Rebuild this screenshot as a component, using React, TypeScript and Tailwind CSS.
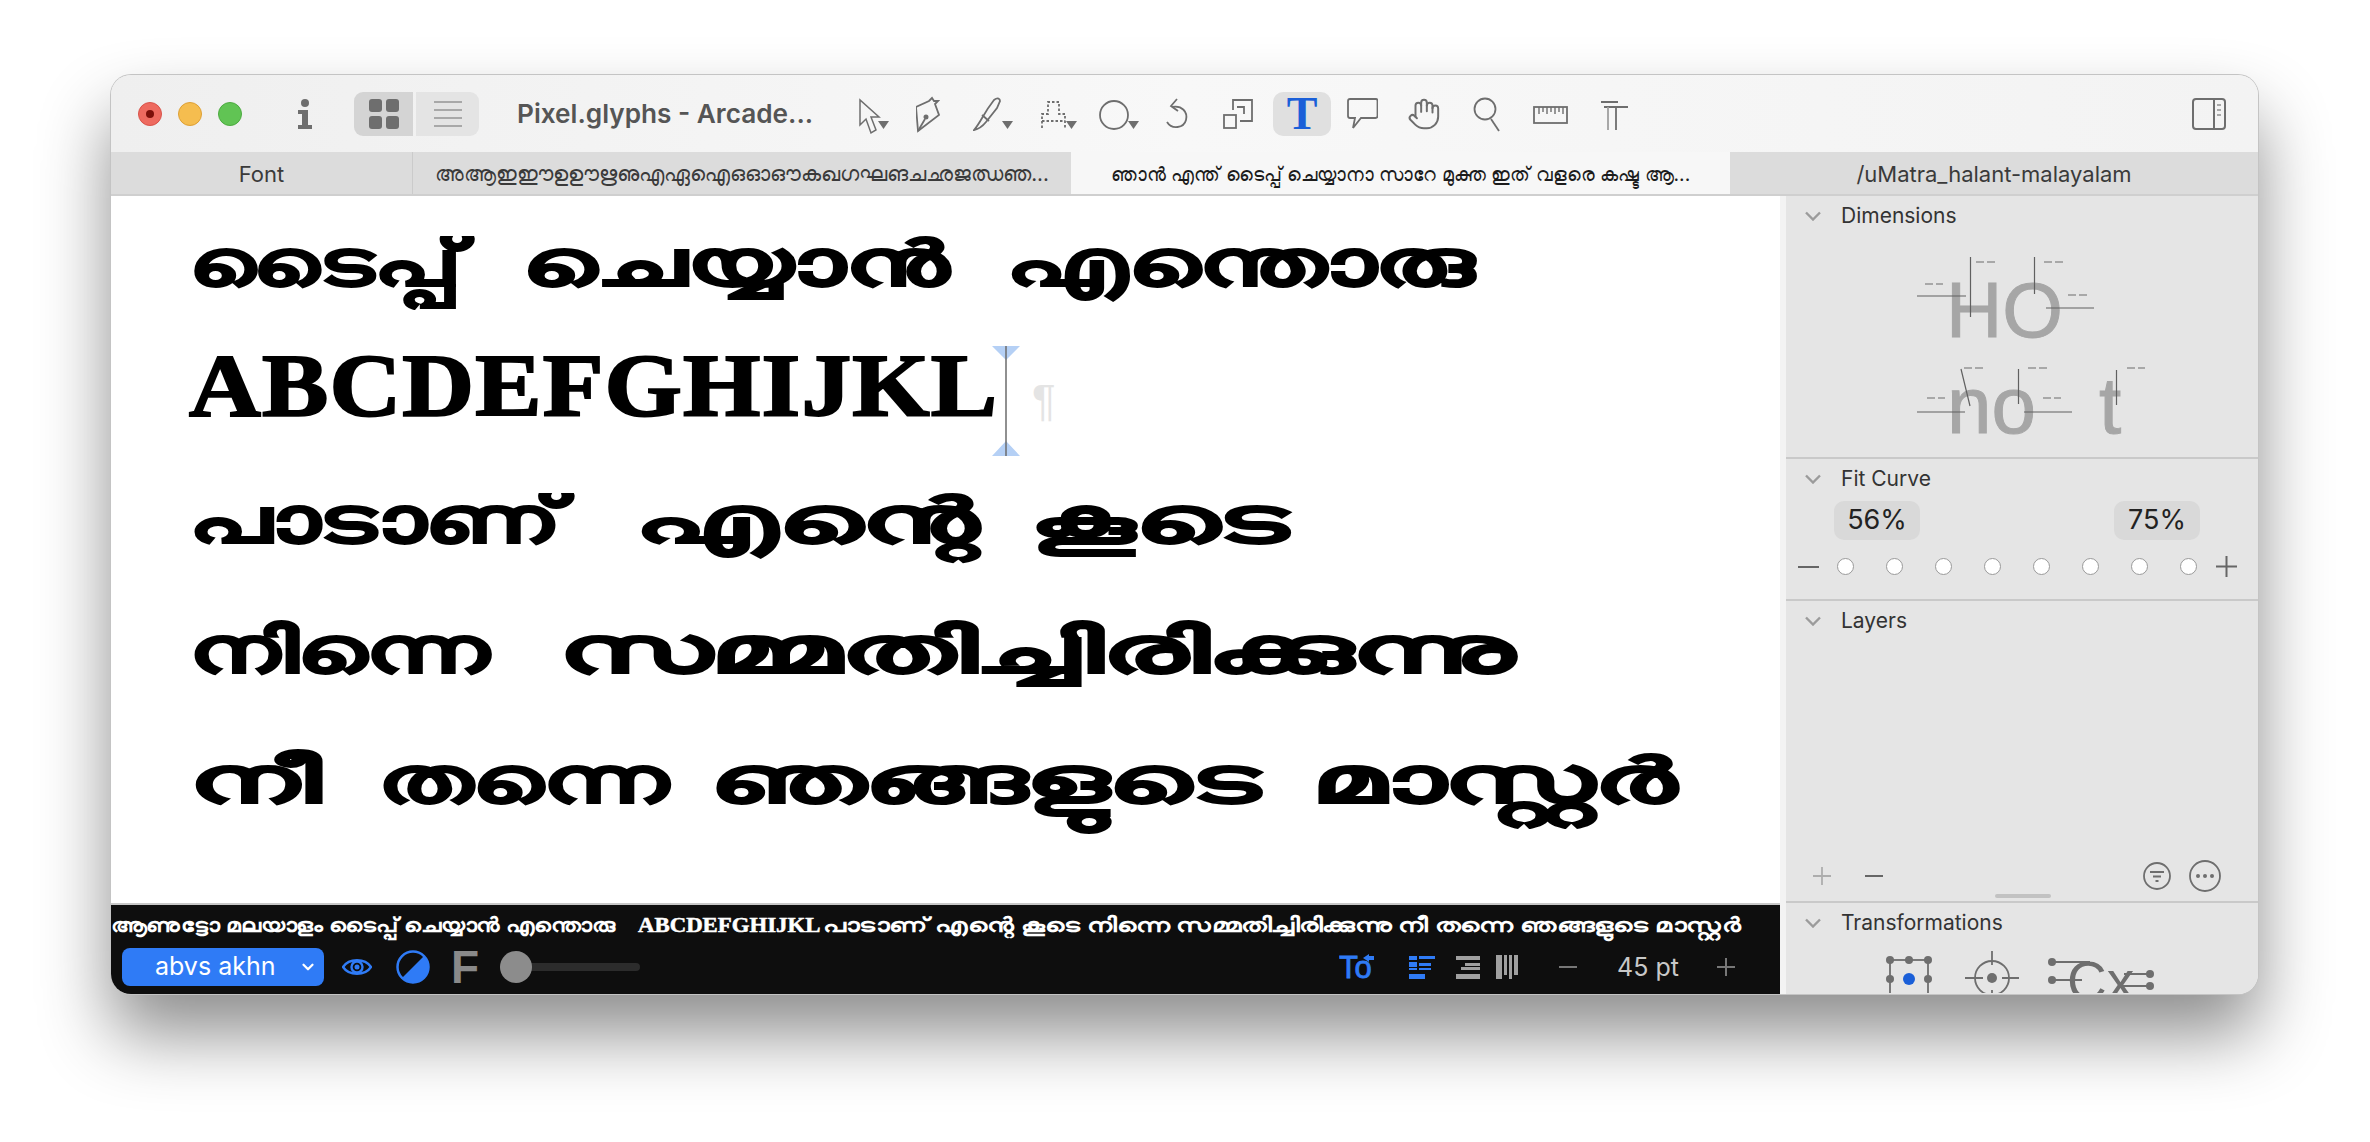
import React from "react";
import { ChevronDown, Hand } from "lucide-react";

const ICON = "#6e6e6e";

const Caret = ({ x }: { x: number }) => <path d={`M${x} 29h11l-5.5 8z`} fill={ICON} stroke="none" />;

const Chevron = () => (
  <svg width="16" height="10" viewBox="0 0 16 10" fill="none" className="shrink-0">
    <path d="M1 1.5l7 7 7-7" stroke="#9b9b9b" strokeWidth="2.4" />
  </svg>
);

const Tool = ({ w, ml, children }: { w: number; ml: string; children: React.ReactNode }) => (
  <svg width={w} height="44" viewBox={`0 0 ${w} 44`} fill="none" stroke={ICON} strokeWidth="1.8" className={`shrink-0 ${ml}`}>
    {children}
  </svg>
);

const Toolbar = () => (
  <div className="h-[77px] shrink-0 flex items-center pt-[1px] pl-[27px] pr-[32px] bg-gradient-to-r from-[#efefef] via-[#f8f8f8] to-[#f3f3f3]">
    <div className="flex items-center gap-[16px]">
      <div className="w-[24px] h-[24px] rounded-full bg-[#ee6a5f] border border-[#d9534a] flex items-center justify-center">
        <div className="w-[8px] h-[8px] rounded-full bg-[#7d100a]" />
      </div>
      <div className="w-[24px] h-[24px] rounded-full bg-[#f5bd4f] border border-[#dea035]" />
      <div className="w-[24px] h-[24px] rounded-full bg-[#61c454] border border-[#4cab40]" />
    </div>
    <svg width="16" height="44" viewBox="0 0 16 44" fill={ICON} className="ml-[55px] shrink-0">
      <circle cx="8" cy="11" r="4" />
      <path d="M1 18h10v15h4v4H1v-4h4V22H1z" />
    </svg>
    <div className="ml-[41px] flex gap-[3px]">
      <div className="w-[59px] h-[44px] rounded-l-[9px] bg-[#d4d4d4] flex items-center justify-center">
        <div className="grid grid-cols-2 gap-[4px]">
          <div className="w-[13px] h-[13px] rounded-[3px] bg-[#6e6e6e]" />
          <div className="w-[13px] h-[13px] rounded-[3px] bg-[#6e6e6e]" />
          <div className="w-[13px] h-[13px] rounded-[3px] bg-[#6e6e6e]" />
          <div className="w-[13px] h-[13px] rounded-[3px] bg-[#6e6e6e]" />
        </div>
      </div>
      <div className="w-[63px] h-[44px] rounded-r-[9px] bg-[#e4e4e4] flex flex-col items-center justify-center gap-[6px]">
        <div className="w-[28px] h-[2px] bg-[#a8a8a8]" />
        <div className="w-[28px] h-[2px] bg-[#a8a8a8]" />
        <div className="w-[28px] h-[2px] bg-[#a8a8a8]" />
        <div className="w-[28px] h-[2px] bg-[#a8a8a8]" />
      </div>
    </div>
    <div className="ml-[38px] w-[300px] shrink-0 whitespace-nowrap text-[26.2px] font-semibold text-[#555555] font-['Inter',sans-serif]">
      Pixel.glyphs - Arcade...
    </div>
    <Tool w={32} ml="ml-[41px]">
      <path d="M2 8v25l6-6 5 14 5-3-5-13h8z" strokeWidth="1.5" />
      <path d="M20 29h11l-5.5 8z" fill={ICON} stroke="none" />
    </Tool>
    <Tool w={24} ml="ml-[26px]">
      <path d="M2 39L0 15l13-6 3-3 2 3h4l-3 3 4 11z" />
      <path d="M2 39l7-12" />
      <circle cx="10" cy="25" r="1.6" fill={ICON} />
    </Tool>
    <Tool w={41} ml="ml-[33px]">
      <path d="M1 38c7-8 9-16 20-30 4-3 6-1 6 1l-3 7-11 14c-4 5-7 7-12 8z" />
      <path d="M9 23l7 6" />
      <Caret x={29} />
    </Tool>
    <Tool w={36} ml="ml-[27px]">
      <path d="M1 36V22h6V10h11v12h6v14M1 29h23" strokeDasharray="2.5 2" />
      <Caret x={25} />
    </Tool>
    <Tool w={40} ml="ml-[22px]">
      <circle cx="15" cy="23" r="14" />
      <Caret x={29} />
    </Tool>
    <Tool w={25} ml="ml-[25px]">
      <path d="M8 15c10-2 16 5 14 13-2 8-14 10-19 2M13 7l-6 7 7 5" />
    </Tool>
    <Tool w={30} ml="ml-[34px]">
      <path d="M10 18V8h19v21H17" />
      <rect x="1" y="23" width="12" height="13" />
      <path d="M14 15h7v7" />
    </Tool>
    <div className="ml-[20px] w-[58px] h-[44px] shrink-0 rounded-[10px] bg-[#e0e0e0] flex items-center justify-center text-[46px] leading-none font-bold text-[#1a5fd8] font-['Liberation_Serif',serif]">
      T
    </div>
    <Tool w={31} ml="ml-[16px]">
      <path d="M3 7h26q1.500 0 1.500 2v15q0 2-2 2H14L6 36l2-10H3q-2 0-2-2V9q0-2 2-2z" />
    </Tool>
    <Hand size={34} strokeWidth={1.4} color={ICON} className="ml-[29px] shrink-0" />
    <Tool w={28} ml="ml-[32px]">
      <circle cx="12" cy="17" r="10.500" />
      <path d="M18 27l8 12" />
    </Tool>
    <Tool w={35} ml="ml-[32px]">
      <rect x="1" y="15" width="33" height="16" />
      <path d="M6 15v7M10 15v5M14 15v7M18 15v5M22 15v7M26 15v5M30 15v7" strokeWidth="1.4" />
    </Tool>
    <Tool w={28} ml="ml-[33px]">
      <path d="M0 10h17M3 15h24" />
      <path d="M7 15v23" stroke="#a0a0a0" />
      <path d="M15 15v23" />
    </Tool>
    <svg width="34" height="32" viewBox="0 0 34 32" fill="none" className="ml-auto shrink-0">
      <rect x="1" y="1" width="32" height="30" rx="3" stroke={ICON} strokeWidth="2" />
      <path d="M22 1v30" stroke={ICON} strokeWidth="2" />
      <path d="M25 7h4M25 12h4M25 17h4" stroke="#a8a8a8" strokeWidth="2" />
    </svg>
  </div>
);

const TabBar = () => (
  <div className="h-[44px] shrink-0 flex border-b-2 border-[#cfcfcf] text-[#3a3a3a] font-['Inter','Noto_Sans',sans-serif]">
    <div className="w-[302px] pt-[2px] flex items-center justify-center bg-[#dcdcdc] text-[22px] border-r border-[#cbcbcb]">Font</div>
    <div className="w-[658px] pt-[2px] flex items-center justify-center bg-[#dcdcdc] text-[20.5px] whitespace-nowrap overflow-hidden">
      അആഇഈഉഊഋഌഎഏഐഒഓഔകഖഗഘങചഛജഝഞ...
    </div>
    <div className="w-[659px] pt-[2px] flex items-center justify-center bg-[#f7f7f7] text-[19.3px] text-[#1c1c1c] whitespace-nowrap overflow-hidden">
      ഞാൻ എന്ത് ടൈപ്പ് ചെയ്യാനാ സാറേ മുക്ത ഇത് വളരെ കഷ്ട ആ...
    </div>
    <div className="flex-1 pt-[2px] flex items-center justify-center bg-[#dcdcdc] text-[22px]">/uMatra_halant-malayalam</div>
  </div>
);

const Cursor = () => (
  <div className="relative w-[28px] h-[110px] shrink-0">
    <svg width="28" height="110" viewBox="0 0 28 110" className="absolute left-0 top-0">
      <path d="M0 0h28L14 14zM0 110h28L14 95z" fill="#b5d0f5" />
      <path d="M14 0v110" stroke="#6b6b6b" strokeWidth="1.5" />
    </svg>
  </div>
);

// the pixel font is far wider than any installed face, so each word gets its own stretch
const Word = ({ box, stretch, children }: { box: string; stretch: string; children: React.ReactNode }) => (
  <div className={`shrink-0 ${box}`}>
    <span className={`inline-block origin-left whitespace-nowrap ${stretch}`}>{children}</span>
  </div>
);

const Canvas = () => (
  <div className="flex-1 bg-white pl-[78px] pt-[19px] overflow-hidden font-['Noto_Sans',sans-serif] font-bold text-black text-[62px] [-webkit-text-stroke:2px_#000]">
    <div className="h-[92px] leading-[92px] flex">
      <Word box="w-[333px]" stretch="scale-x-[1.49]">ടൈപ്പ്</Word>
      <Word box="w-[484px]" stretch="scale-x-[1.68]">ചെയ്യാൻ</Word>
      <Word box="w-[470px]" stretch="scale-x-[1.62]">എന്തൊരു</Word>
    </div>
    <div className="h-[132px] mt-[14px] flex items-start">
      <Word box="w-[803px] text-[88px] leading-[130px] tracking-[1px] font-['Liberation_Serif',serif]" stretch="scale-x-[1.13]">
        ABCDEFGHIJKL
      </Word>
      <div className="mt-[25px] flex items-center [-webkit-text-stroke:0]">
        <Cursor />
        <span className="ml-[12px] text-[44px] leading-none font-normal text-[#e4e4e4] font-['Liberation_Sans',sans-serif]">¶</span>
      </div>
    </div>
    <div className="h-[130px] leading-[130px] flex">
      <Word box="w-[446px]" stretch="scale-x-[1.55]">പാടാണ്</Word>
      <Word box="w-[395px]" stretch="scale-x-[1.9]">എന്റെ</Word>
      <Word box="w-[260px]" stretch="scale-x-[1.9]">കൂടെ</Word>
    </div>
    <div className="h-[130px] leading-[130px] flex">
      <Word box="w-[370px]" stretch="scale-x-[1.57]">നിന്നെ</Word>
      <Word box="w-[940px]" stretch="scale-x-[1.92]">സമ്മതിച്ചിരിക്കുന്നു</Word>
    </div>
    <div className="h-[130px] leading-[130px] flex">
      <Word box="w-[189px]" stretch="scale-x-[1.9]">നീ</Word>
      <Word box="w-[332px]" stretch="scale-x-[1.6]">തന്നെ</Word>
      <Word box="w-[602px]" stretch="scale-x-[1.87]">ഞങ്ങളുടെ</Word>
      <Word box="w-[370px]" stretch="scale-x-[1.89]">മാസ്റ്റർ</Word>
    </div>
  </div>
);

const BottomBar = () => (
  <div className="h-[91px] shrink-0 bg-[#0e0e0e] border-t-2 border-[#c8c8c8] flex flex-col overflow-hidden">
    <div className="h-[39px] shrink-0 flex items-center overflow-hidden text-white text-[20px] font-bold font-['Noto_Sans',sans-serif]">
      <Word box="w-[527px]" stretch="scale-x-[1.18]">ആണുട്ടോ മലയാളം ടൈപ്പ് ചെയ്യാൻ എന്തൊരു</Word>
      <Word box="w-[185px] font-['Liberation_Serif',serif] [-webkit-text-stroke:0.5px_#fff]" stretch="scale-x-[1.14]">ABCDEFGHIJKL</Word>
      <Word box="w-[930px]" stretch="scale-x-[1.35]">പാടാണ് എന്റെ കൂടെ നിന്നെ സമ്മതിച്ചിരിക്കുന്നു നീ തന്നെ ഞങ്ങളുടെ മാസ്റ്റർ</Word>
    </div>
    <div className="flex-1 flex items-center pl-[11px] pr-[45px] pb-[5px]">
      <div className="relative w-[202px] h-[38px] rounded-[8px] bg-[#2f7bf6] text-white text-[25px] font-['Inter',sans-serif] pl-[33px] flex items-center">
        abvs akhn
        <ChevronDown size={18} strokeWidth={3} className="absolute right-[7px] top-[10px]" />
      </div>
      <svg width="30" height="20" viewBox="0 0 30 20" fill="none" className="ml-[18px] shrink-0">
        <path d="M1 10C7 1 23 1 29 10 23 19 7 19 1 10z" stroke="#2f7bf6" strokeWidth="2.4" />
        <circle cx="15" cy="10" r="5.500" stroke="#2f7bf6" strokeWidth="2.4" />
        <circle cx="15" cy="10" r="2.500" fill="#2f7bf6" />
      </svg>
      <svg width="34" height="34" viewBox="0 0 34 34" fill="none" className="ml-[24px] shrink-0">
        <circle cx="17" cy="17" r="15.500" stroke="#2f7bf6" strokeWidth="2.500" />
        <path d="M28 6A15.500 15.500 0 0 1 6 28z" fill="#2f7bf6" />
      </svg>
      <span className="ml-[21px] w-[29px] text-[46px] leading-none font-bold text-[#8a8a8a] font-['Liberation_Sans',sans-serif]">F</span>
      <div className="ml-[20px] relative w-[140px] h-[8px] rounded-full bg-[#2c2c2c]">
        <div className="absolute left-0 top-[-12px] w-[32px] h-[32px] rounded-full bg-[#8c8c8c]" />
      </div>
      <svg width="36" height="26" viewBox="0 0 36 26" className="ml-auto shrink-0">
        <text x="0" y="24" fontSize="31" fill="#2f7bf6" stroke="#2f7bf6" strokeWidth="0.8" fontFamily="Liberation Sans, sans-serif">To</text>
        <path d="M24 4l6-4v2h5v4h-5v2z" fill="#2f7bf6" />
      </svg>
      <svg width="26" height="23" viewBox="0 0 26 23" fill="#2f7bf6" className="ml-[34px] shrink-0">
        <path d="M0 0h8v4H0zM10 0h16v3H10zM0 6h8v5H0zM10 7h12v3H10zM0 12h8v2H0zM10 12h12v2H10zM0 18h16v5H0z" />
      </svg>
      <svg width="24" height="23" viewBox="0 0 24 23" fill="#a0a0a0" className="ml-[21px] shrink-0">
        <path d="M0 0h24v4H0zM9 7h15v3H9zM5 11h19v3H5zM0 18h24v5H0z" />
      </svg>
      <svg width="22" height="24" viewBox="0 0 22 24" fill="#a0a0a0" className="ml-[16px] shrink-0">
        <path d="M0 0h6v24H0zM8 0h3v20H8zM13 0h3v24h-3zM18 0h4v20h-4z" />
      </svg>
      <div className="ml-[41px] w-[18px] h-[2px] bg-[#777777]" />
      <span className="ml-[40px] w-[60px] whitespace-nowrap text-[25px] leading-none text-[#c8c8c8] font-['Inter',sans-serif]">45 pt</span>
      <svg width="18" height="18" viewBox="0 0 18 18" className="ml-[40px] shrink-0">
        <path d="M0 9h18M9 0v18" stroke="#777777" strokeWidth="2" />
      </svg>
    </div>
  </div>
);

const SectionHeader = ({ title }: { title: string }) => (
  <div className="h-[37px] shrink-0 flex items-center gap-[20px] pt-[2px] pl-[19px] text-[21px] text-[#333333]">
    <Chevron />
    {title}
  </div>
);

const MetricDiagram = () => (
  <svg width="472" height="224" viewBox="0 37 472 224" fill="none" className="shrink-0">
    <g fill="#a6a6a6" stroke="#a6a6a6" strokeWidth="1" fontFamily="Liberation Sans, sans-serif">
      <text x="160" y="141" fontSize="78">HO</text>
      <text x="161" y="237" fontSize="80">no</text>
      <text x="313" y="237" fontSize="80">t</text>
    </g>
    <path
      d="M184.500 61v60M248.500 61v37M131 100h49M260 112h48M175 173l9 37M232.500 173v35M330.500 174v35M131 216h48M238 216h48"
      stroke="#606060"
      strokeWidth="1.200"
    />
    <path
      d="M190 66h19M258 66h19M139 88h18M282 99h19M178 172h19M242 172h19M341 172h18M141 202h18M257 202h18"
      stroke="#a8a8a8"
      strokeWidth="2"
      strokeDasharray="8 3"
    />
  </svg>
);

const Sidebar = () => (
  <div className="w-[472px] shrink-0 bg-[#e5e5e5] flex flex-col overflow-hidden font-['Inter',sans-serif]">
    <div className="h-[263px] shrink-0 border-b-2 border-[#c9c9c9] flex flex-col">
      <SectionHeader title="Dimensions" />
      <MetricDiagram />
    </div>
    <div className="h-[142px] shrink-0 border-b-2 border-[#c9c9c9]">
      <SectionHeader title="Fit Curve" />
      <div className="mt-[5px] pl-[48px] pr-[58px] flex justify-between">
        <div className="w-[86px] h-[39px] rounded-[10px] bg-[#d9d9d9] flex items-center justify-center text-[27px] text-[#222222]">56%</div>
        <div className="w-[86px] h-[39px] rounded-[10px] bg-[#d9d9d9] flex items-center justify-center text-[27px] text-[#222222]">75%</div>
      </div>
      <div className="mt-[16px] pl-[12px] flex items-center">
        <div className="w-[21px] h-[2px] bg-[#666666]" />
        <div className="ml-[18px] flex gap-[32px]">
          {[0, 1, 2, 3, 4, 5, 6, 7].map((i) => (
            <div key={i} className="w-[17px] h-[17px] rounded-full bg-white border border-[#9a9a9a]" />
          ))}
        </div>
        <svg width="21" height="21" viewBox="0 0 21 21" className="ml-[19px] shrink-0">
          <path d="M0 10.500h21M10.500 0v21" stroke="#666666" strokeWidth="2" />
        </svg>
      </div>
    </div>
    <div className="relative h-[302px] shrink-0 border-b-2 border-[#c9c9c9] flex flex-col">
      <SectionHeader title="Layers" />
      <div className="mt-auto mb-[9px] pl-[27px] pr-[37px] flex items-center">
        <svg width="18" height="18" viewBox="0 0 18 18">
          <path d="M0 9h18M9 0v18" stroke="#adadad" strokeWidth="1.800" />
        </svg>
        <div className="ml-[34px] w-[18px] h-[2px] bg-[#666666]" />
        <svg width="28" height="28" viewBox="0 0 28 28" fill="none" className="ml-auto">
          <circle cx="14" cy="14" r="13" stroke={ICON} strokeWidth="1.800" />
          <path d="M7 10h14M10 14.500h8M12.500 19h3" stroke={ICON} strokeWidth="1.800" />
        </svg>
        <svg width="32" height="32" viewBox="0 0 32 32" fill="none" className="ml-[18px]">
          <circle cx="16" cy="16" r="15" stroke={ICON} strokeWidth="1.800" />
          <circle cx="9" cy="16" r="2" fill={ICON} />
          <circle cx="16" cy="16" r="2" fill={ICON} />
          <circle cx="23" cy="16" r="2" fill={ICON} />
        </svg>
      </div>
      <div className="absolute left-[209px] bottom-[3px] w-[56px] h-[4px] rounded-full bg-[#c2c2c2]" />
    </div>
    <div className="flex-1 flex flex-col min-h-0">
      <SectionHeader title="Transformations" />
      <svg width="472" height="53" viewBox="0 0 472 53" fill="none" className="shrink-0">
        <rect x="104" y="20" width="38" height="60" stroke={ICON} strokeWidth="1.800" />
        <g fill={ICON}>
          <circle cx="104" cy="20" r="4" />
          <circle cx="123" cy="20" r="4" />
          <circle cx="142" cy="20" r="4" />
          <circle cx="104" cy="39" r="4" />
          <circle cx="142" cy="39" r="4" />
          <circle cx="206" cy="38" r="5" />
          <circle cx="266" cy="22" r="4" />
          <circle cx="266" cy="40" r="4" />
          <circle cx="364" cy="34" r="4" />
          <circle cx="364" cy="46" r="4" />
          <text x="281" y="60" fontSize="55" stroke="none" fontFamily="Liberation Sans, sans-serif">Cx</text>
        </g>
        <circle cx="123" cy="39" r="6" fill="#1a5fd8" />
        <circle cx="206" cy="38" r="17" stroke={ICON} strokeWidth="1.800" />
        <path d="M206 11v14M179 38h18M216 38h17M206 50v6M266 22h38M266 40h30M338 34h26M334 46h30" stroke={ICON} strokeWidth="1.800" />
      </svg>
    </div>
  </div>
);

const App = () => (
  <div className="w-[2370px] h-[1142px] bg-white pt-[75px] pl-[111px] overflow-hidden">
    <div className="w-[2147px] h-[919px] rounded-[20px] overflow-hidden flex flex-col bg-[#f3f3f3] shadow-[0_0_0_1px_#c4c4c4,0_40px_70px_rgba(0,0,0,0.45)]">
      <Toolbar />
      <TabBar />
      <div className="flex-1 flex min-h-0">
        <div className="w-[1669px] shrink-0 flex flex-col">
          <Canvas />
          <BottomBar />
        </div>
        <div className="w-[6px] shrink-0 bg-[#f3f3f3]" />
        <Sidebar />
      </div>
    </div>
  </div>
);

export default App;
